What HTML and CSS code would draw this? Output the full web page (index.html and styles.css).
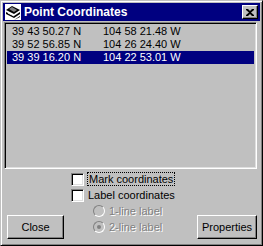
FILE: index.html
```html
<!DOCTYPE html>
<html lang="en">
<head>
    <meta charset="UTF-8">
    <title>Point Coordinates</title>
    <link rel="stylesheet" href="styles.css">
</head>
<body>
    <div class="window">
        <div class="titlebar">
            <svg class="app-icon" width="16" height="16" viewBox="0 0 16 16">
                <rect x="0" y="0" width="16" height="16" fill="#fff"/>
                <path d="M1 6l6-4 8 4-6 4z" fill="#000"/>
                <path d="M4 5l3-2 5 3-3 2z" fill="#808080"/>
                <path d="M1 8l8 4 6-4v2l-6 4-8-4z" fill="#000"/>
                <path d="M3 9l6 3" stroke="#fff" stroke-width="1"/>
                <path d="M1 12l8 4 6-4v1l-6 3-8-4z" fill="#000"/>
            </svg>
            <span class="title">Point Coordinates</span>
            <button class="close-x" type="button">
                <svg width="8" height="7" viewBox="0 0 8 7">
                    <path d="M0 0h2l2 2 2-2h2v1L5 3.5 8 6v1H6L4 5 2 7H0V6l3-2.5L0 1z" fill="#000"/>
                </svg>
            </button>
        </div>

        <div class="list">
            <div class="row"><span class="lat">39 43 50.27 N</span><span>104 58 21.48 W</span></div>
            <div class="row"><span class="lat">39 52 56.85 N</span><span>104 26 24.40 W</span></div>
            <div class="row selected"><span class="lat">39 39 16.20 N</span><span>104 22 53.01 W</span></div>
        </div>

        <div class="footer">
            <button class="btn btn-close" type="button">Close</button>
            <div class="options">
                <label class="check"><span class="box"></span><span class="focus">Mark coordinates</span></label>
                <label class="check"><span class="box"></span><span>Label coordinates</span></label>
                <label class="radio disabled"><span class="dot"></span><span>1-line label</span></label>
                <label class="radio disabled checked"><span class="dot"></span><span>2-line label</span></label>
            </div>
            <button class="btn btn-props" type="button">Properties</button>
        </div>
    </div>
</body>
</html>
```

FILE: styles.css
```css
body {
    margin: 0;
    padding: 0;
    background-color: #c0c0c0;
    font-family: "Liberation Sans", Arial, sans-serif;
    font-size: 11px;
}

.window {
    width: 263px;
    height: 246px;
    box-sizing: border-box;
    background-color: #c0c0c0;
    border: 1px solid;
    border-color: #c0c0c0 #000 #000 #c0c0c0;
    box-shadow: inset 1px 1px #fff, inset -1px -1px #808080;
    padding: 2px;
    display: flex;
    flex-direction: column;
}

.titlebar {
    height: 18px;
    background-color: #000080;
    color: #fff;
    display: flex;
    align-items: center;
    padding: 0 2px;
}

.app-icon {
    margin-right: 3px;
}

.title {
    font-weight: bold;
    font-size: 12px;
    flex: 1;
}

.close-x {
    width: 16px;
    height: 14px;
    padding: 0;
    background-color: #c0c0c0;
    border: 1px solid;
    border-color: #fff #000 #000 #fff;
    box-shadow: inset -1px -1px #808080;
    display: flex;
    align-items: center;
    justify-content: center;
}

.list {
    margin: 1px 3px 0 1px;
    height: 147px;
    box-sizing: border-box;
    border: 1px solid;
    border-color: #808080 #fff #fff #808080;
    box-shadow: inset 1px 1px #000, inset -1px -1px #dfdfdf;
    padding: 2px;
}

.row {
    display: flex;
    height: 13px;
    line-height: 13px;
    padding-left: 5px;
}

.row.selected {
    background-color: #000080;
    color: #fff;
}

.lat {
    width: 91px;
}

.footer {
    flex: 1;
    display: flex;
    align-items: flex-end;
    padding: 0 3px 4px 4px;
}

.btn {
    height: 24px;
    box-sizing: border-box;
    background-color: #c0c0c0;
    border: 1px solid;
    border-color: #fff #000 #000 #fff;
    box-shadow: inset -1px -1px #808080;
    font-family: "Liberation Sans", Arial, sans-serif;
    font-size: 11px;
    padding: 0;
}

.btn-close {
    width: 57px;
}

.btn-props {
    width: 60px;
}

.options {
    flex: 1;
    display: flex;
    flex-direction: column;
    padding-left: 7px;
    padding-bottom: 4px;
    align-self: stretch;
    justify-content: flex-end;
}

.check, .radio {
    display: flex;
    align-items: center;
    height: 16px;
}

.box {
    width: 13px;
    height: 13px;
    box-sizing: border-box;
    background-color: #fff;
    border: 1px solid;
    border-color: #808080 #fff #fff #808080;
    box-shadow: inset 1px 1px #000, inset -1px -1px #dfdfdf;
    margin-right: 4px;
}

.focus {
    outline: 1px dotted #000;
    padding: 0 1px;
}

.radio {
    padding-left: 22px;
}

.dot {
    width: 12px;
    height: 12px;
    box-sizing: border-box;
    border-radius: 50%;
    border: 1px solid;
    border-color: #808080 #fff #fff #808080;
    background-color: #c0c0c0;
    margin-right: 4px;
    position: relative;
}

.radio.checked .dot::after {
    content: "";
    position: absolute;
    left: 3px;
    top: 3px;
    width: 4px;
    height: 4px;
    border-radius: 50%;
    background-color: #808080;
}

.disabled {
    color: #808080;
    text-shadow: 1px 1px #fff;
}
```
